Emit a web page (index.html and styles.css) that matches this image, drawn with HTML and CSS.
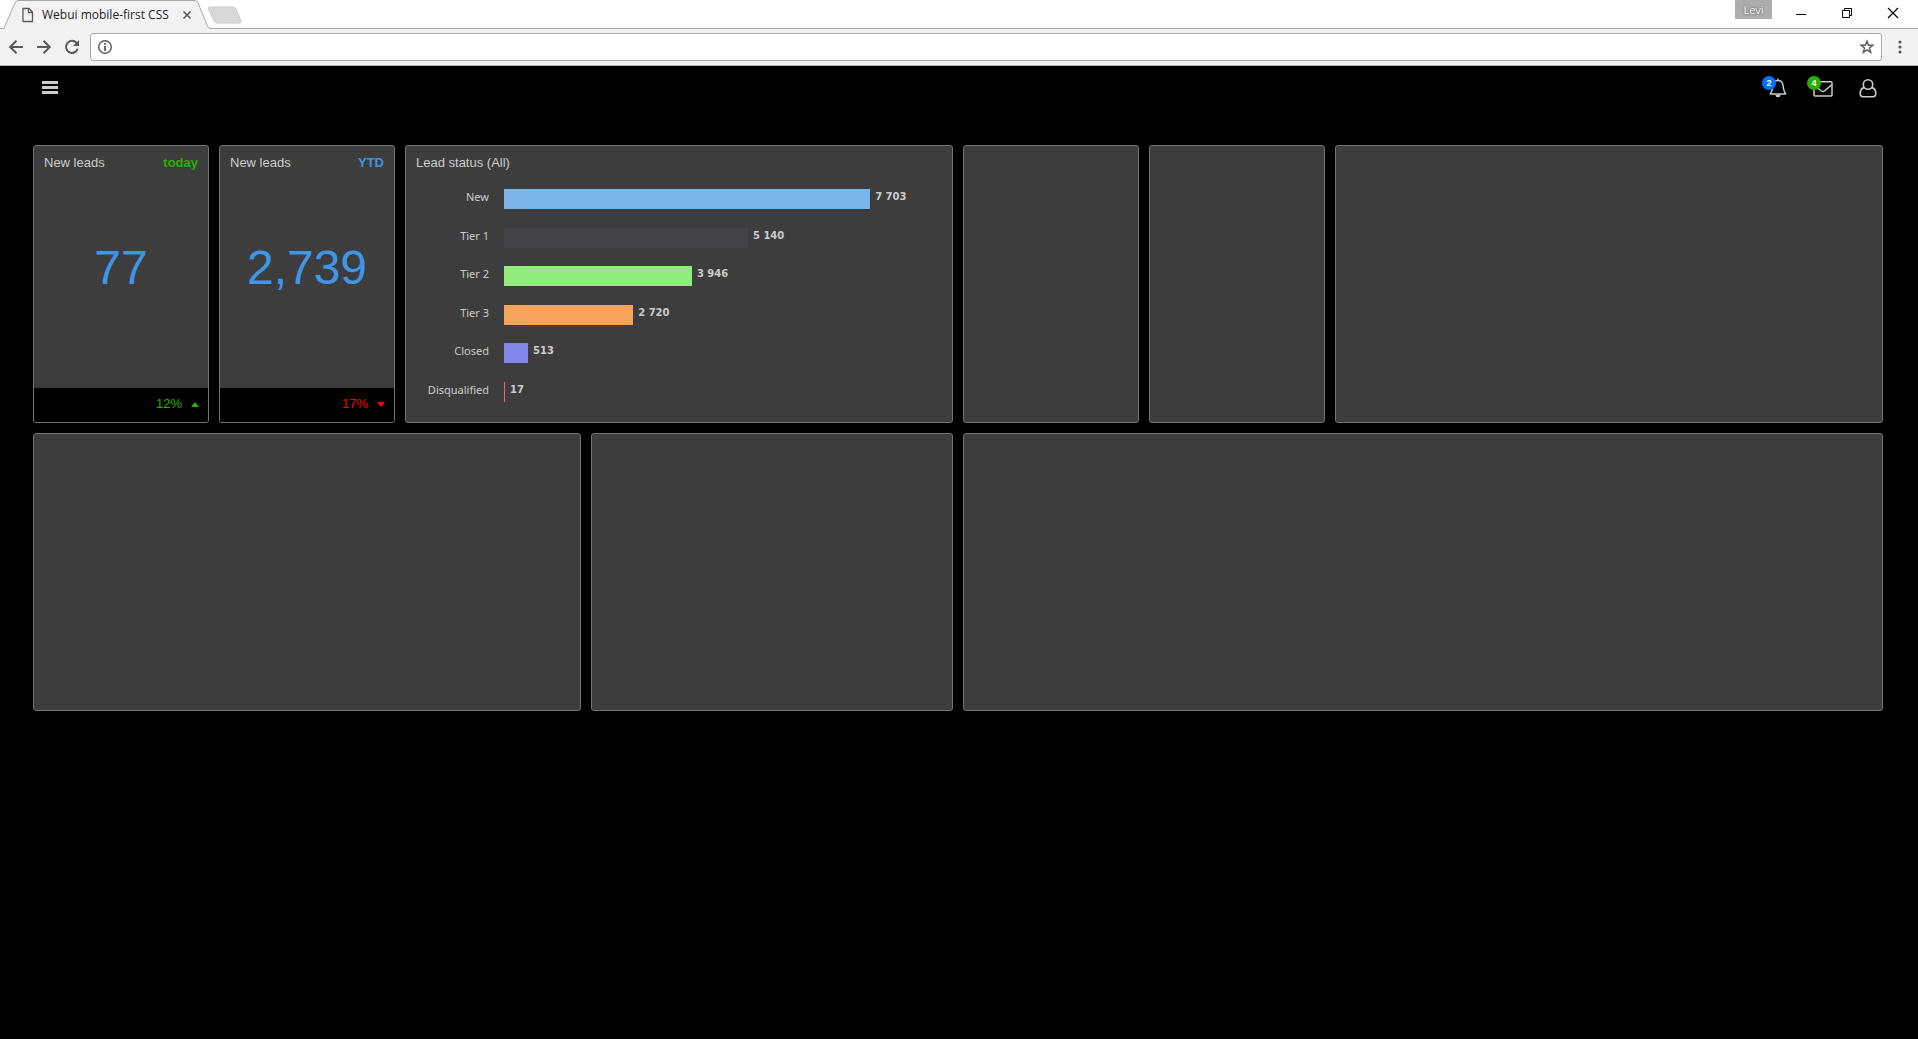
FILE: index.html
```html
<!DOCTYPE html>
<html lang="en">
<head>
<meta charset="utf-8">
<title>Webui mobile-first CSS</title>
<link rel="stylesheet" href="styles.css">
</head>
<body>
<div class="browser">
  <div class="tabstrip">
    <div class="tab">
      <svg class="tab-shape" width="208" height="29" viewBox="0 0 208 29" aria-hidden="true"><path d="M0 28.500 Q1 28.500 1.500 27 L12 3 Q13 .5 15 .5 H192 Q194 .5 195 3 L205 27 Q206 28.500 208 28.500" fill="#f2f2f2" stroke="#a9a9a9"/><path d="M2 28.500H206" stroke="#f2f2f2"/></svg>
      <svg class="tab-icon" width="12" height="16" viewBox="0 0 12 16" aria-hidden="true"><path d="M1 1.500H7L10.500 5V14.500H1Z M6.500 1.500V5.500H10.500" fill="none" stroke="#5a5a5a" stroke-width="1.300"/></svg>
      <span class="tab-title">Webui mobile-first CSS</span>
      <button class="tab-close" aria-label="Close tab"><svg width="10" height="10" viewBox="0 0 10 10"><path d="M1.500 1.500L8.500 8.500M8.500 1.500L1.500 8.500" stroke="#5a5a5a" stroke-width="1.600"/></svg></button>
    </div>
    <button class="new-tab" aria-label="New tab"><svg width="36" height="19" viewBox="0 0 36 19"><path d="M3 1H26Q28 1 29 3L34 15Q34.500 17 33 17H10Q8 17 7 15L1.500 3Q1 1 3 1Z" fill="#d8d8d8" stroke="#cacaca"/></svg></button>
    <button class="profile">Levi</button>
    <button class="win" aria-label="Minimize"><svg width="12" height="12" viewBox="0 0 12 12"><path d="M1 7.500H11" stroke="#000"/></svg></button>
    <button class="win" aria-label="Restore"><svg width="12" height="12" viewBox="0 0 12 12"><path d="M1.500 3.500H8.500V10.500H1.500ZM3.500 3.500V1.500H10.500V8.500H8.500" fill="none" stroke="#000"/></svg></button>
    <button class="win" aria-label="Close"><svg width="12" height="12" viewBox="0 0 12 12"><path d="M1 1L11 11M11 1L1 11" stroke="#000" stroke-width="1.200"/></svg></button>
  </div>
  <div class="toolbar">
    <button class="nav" aria-label="Back"><svg width="16" height="16" viewBox="0 0 16 16"><path d="M15 8H2.500M8.500 1.700L2.200 8L8.500 14.300" fill="none" stroke="#5a5a5a" stroke-width="2"/></svg></button>
    <button class="nav" aria-label="Forward"><svg width="16" height="16" viewBox="0 0 16 16"><path d="M1 8H13.500M7.500 1.700L13.800 8L7.500 14.300" fill="none" stroke="#5a5a5a" stroke-width="2"/></svg></button>
    <button class="nav" aria-label="Reload"><svg width="16" height="16" viewBox="0 0 16 16"><path d="M12.600 4A6 6 0 1 0 13.700 9.800" fill="none" stroke="#5a5a5a" stroke-width="2"/><path d="M15 1V7H9Z" fill="#5a5a5a"/></svg></button>
    <div class="address">
      <svg width="16" height="16" viewBox="0 0 16 16" aria-hidden="true"><circle cx="8" cy="8" r="6.300" fill="none" stroke="#5a5a5a" stroke-width="1.400"/><path d="M8 4V5.700M8 7V12" stroke="#5a5a5a" stroke-width="1.800"/></svg>
      <input class="address-input" type="text" aria-label="Address">
      <button class="star" aria-label="Bookmark"><svg width="16" height="16" viewBox="0 0 16 16"><path d="M8 2.200L9.600 6.300H13.900L10.500 9L11.700 13.400L8 10.900L4.300 13.400L5.500 9L2.100 6.300H6.400Z" fill="none" stroke="#5a5a5a" stroke-width="1.400"/></svg></button>
    </div>
    <button class="menu-dots" aria-label="Menu"><svg width="4" height="14" viewBox="0 0 4 14"><g fill="#5a5a5a"><circle cx="2" cy="2" r="1.600"/><circle cx="2" cy="7" r="1.600"/><circle cx="2" cy="12" r="1.600"/></g></svg></button>
  </div>
</div>

<header class="app-header">
  <button class="icon-button" aria-label="Navigation"><svg width="16" height="14" viewBox="0 0 16 14"><path d="M0 1.500H16M0 6.500H16M0 11.500H16" stroke="#ccc" stroke-width="3"/></svg></button>
  <div class="header-actions">
    <button class="icon-button" aria-label="Notifications">
      <svg width="20" height="20" viewBox="0 0 20 20"><path d="M10 .8V2.500M2.300 16C4.500 13 4.800 10.500 5 7.500C5.300 4.200 7.200 2.600 10 2.600S14.700 4.200 15 7.500C15.200 10.500 15.500 13 17.700 16Z" fill="none" stroke="#ccc" stroke-width="1.500" stroke-linejoin="round"/><path d="M7.500 16.700H12.500A2.500 2.500 0 0 1 7.500 16.700Z" fill="#ccc"/></svg>
      <span class="badge badge-blue">2</span>
    </button>
    <button class="icon-button" aria-label="Messages">
      <svg width="20" height="20" viewBox="0 0 20 20"><rect x="1" y="3.700" width="18" height="14.300" rx="1" fill="none" stroke="#ccc" stroke-width="1.500"/><path d="M1 7.500L8.500 13Q10 14 11.500 13L19 6.500" fill="none" stroke="#ccc" stroke-width="1.500"/></svg>
      <span class="badge badge-green">4</span>
    </button>
    <button class="icon-button" aria-label="Account">
      <svg width="20" height="20" viewBox="0 0 20 20"><circle cx="10" cy="6.500" r="4.700" fill="none" stroke="#ccc" stroke-width="1.600"/><path d="M6.500 9.600C3.500 9.900 2.200 12.500 2.200 15.500Q2.200 18.700 5 18.700H15Q17.800 18.700 17.800 15.500C17.800 12.500 16.500 9.900 13.500 9.600" fill="none" stroke="#ccc" stroke-width="1.600"/></svg>
    </button>
  </div>
</header>

<main class="dashboard">
  <section class="card">
    <div class="card-head"><h2 class="card-title">New leads</h2><strong class="up">today</strong></div>
    <div class="figure">77</div>
    <div class="card-foot up">12%<svg width="8" height="5" viewBox="0 0 8 5" aria-hidden="true"><path d="M0 5L4 0L8 5Z" fill="currentColor"/></svg></div>
  </section>
  <section class="card">
    <div class="card-head"><h2 class="card-title">New leads</h2><strong class="info">YTD</strong></div>
    <div class="figure">2,739</div>
    <div class="card-foot down">17%<svg width="8" height="5" viewBox="0 0 8 5" aria-hidden="true"><path d="M0 0L4 5L8 0Z" fill="currentColor"/></svg></div>
  </section>
  <section class="card span-3">
    <div class="card-head"><h2 class="card-title">Lead status (All)</h2></div>
    <div class="chart">
      <div class="row"><span class="label">New</span><div class="track"><div class="bar c-new" style="width:83.6%"></div><b class="value">7 703</b></div></div>
      <div class="row"><span class="label">Tier 1</span><div class="track"><div class="bar c-tier1" style="width:55.7%"></div><b class="value">5 140</b></div></div>
      <div class="row"><span class="label">Tier 2</span><div class="track"><div class="bar c-tier2" style="width:42.9%"></div><b class="value">3 946</b></div></div>
      <div class="row"><span class="label">Tier 3</span><div class="track"><div class="bar c-tier3" style="width:29.5%"></div><b class="value">2 720</b></div></div>
      <div class="row"><span class="label">Closed</span><div class="track"><div class="bar c-closed" style="width:5.5%"></div><b class="value">513</b></div></div>
      <div class="row"><span class="label">Disqualified</span><div class="track"><div class="bar c-disq" style="width:0.2%"></div><b class="value">17</b></div></div>
    </div>
  </section>
  <section class="card"></section>
  <section class="card"></section>
  <section class="card span-3"></section>
  <section class="card span-3"></section>
  <section class="card span-2"></section>
  <section class="card span-5"></section>
</main>
</body>
</html>
```
FILE: styles.css
```css
* { box-sizing: border-box; }
body {
  margin: 0;
  min-height: 100vh;
  background: #000;
  color: #ccc;
  font: 13px/16px "Liberation Sans", Arial, sans-serif;
}
button {
  display: flex;
  align-items: center;
  justify-content: center;
  padding: 0;
  border: 0;
  background: none;
  color: inherit;
  font: inherit;
}
svg { display: block; flex: none; }

/* Browser frame */
.tabstrip {
  display: flex;
  height: 29px;
  padding: 0 2px 0 3px;
  background: #fff;
  border-bottom: 1px solid #a9a9a9;
}
.tab {
  position: relative;
  display: flex;
  align-items: center;
  width: 204px;
  height: 29px;
  padding: 0 15px 0 19px;
  gap: 8px;
}
.tab-shape { position: absolute; left: 0; top: 0; }
.tab-icon, .tab-title, .tab-close { position: relative; }
.tab-title {
  flex: 1;
  color: #222;
  font: 12px/16px "Open Sans", "Noto Sans", sans-serif;
  white-space: nowrap;
}
.new-tab { height: 31px; }
.profile {
  width: 37px;
  height: 19px;
  margin-left: auto;
  margin-right: 6px;
  background: #adadad;
  color: #fff;
  font: 11px/16px "Open Sans", sans-serif;
  text-shadow: 0 0 2px #333;
}
.win { width: 46px; height: 26px; }
.toolbar {
  display: flex;
  align-items: center;
  height: 37px;
  padding: 0 16px 0 2px;
  background: #f2f2f2;
  border-bottom: 1px solid #b5b5b5;
}
.nav { width: 28px; height: 28px; }
.address {
  display: flex;
  flex: 1;
  align-items: center;
  height: 28px;
  margin: 0 16px 0 4px;
  padding: 0 6px;
  background: #fff;
  border: 1px solid #a9a9a9;
  border-radius: 3px;
}
.address-input {
  flex: 1;
  border: 0;
  outline: 0;
  background: none;
  font: inherit;
}

/* Application header */
.app-header {
  display: flex;
  align-items: center;
  justify-content: space-between;
  height: 44px;
  padding: 0 40px;
}
.header-actions { display: flex; gap: 25px; }
.icon-button { position: relative; min-width: 20px; height: 20px; }
.badge {
  position: absolute;
  left: -6px;
  top: -2px;
  width: 14px;
  height: 14px;
  border-radius: 50%;
  color: #fff;
  font: bold 9px/14px "Liberation Sans", Arial, sans-serif;
  text-align: center;
}
.badge-blue { background: #0070ff; }
.badge-green { background: #28b000; }

/* Dashboard grid */
.dashboard {
  display: grid;
  grid-template-columns: repeat(10, 1fr);
  grid-auto-rows: minmax(278px, auto);
  gap: 10px;
  padding: 35px 35px 35px 33px;
}
.card {
  display: flex;
  flex-direction: column;
  min-width: 0;
  overflow: hidden;
  background: #3d3d3d;
  border: 1px solid #747474;
  border-radius: 3px;
}
.span-2 { grid-column: span 2; }
.span-3 { grid-column: span 3; }
.span-5 { grid-column: span 5; }
.card-head {
  display: flex;
  justify-content: space-between;
  padding: 9px 10px 7px;
}
.card-title { margin: 0; font-size: 13px; font-weight: normal; }
.figure {
  display: flex;
  flex: 1;
  align-items: center;
  justify-content: center;
  padding-bottom: 30px;
  color: #4096e6;
  font-size: 48px;
  line-height: 56px;
}
.card-foot {
  display: flex;
  align-items: center;
  justify-content: flex-end;
  gap: 9px;
  height: 34px;
  padding: 0 9px 2px;
  background: #000;
}
.up { color: #28b000; }
.down { color: #f00; }
.info { color: #4096e6; }

/* Lead status chart */
.chart {
  display: flex;
  flex: 1;
  flex-direction: column;
  padding: 2px 10px 11px;
  font: 11px/16px "Noto Sans", "Open Sans", sans-serif;
}
.row { display: flex; flex: 1; align-items: center; gap: 15px; }
.label { width: 73px; padding-bottom: 4px; text-align: right; }
.track { display: flex; flex: 1; align-items: center; gap: 5px; }
.bar { flex: none; height: 20px; }
.value { padding-bottom: 4px; font: bold 10px/16px "DejaVu Sans", sans-serif; }
.c-new { background: #7cb5ec; }
.c-tier1 { background: #434348; }
.c-tier2 { background: #90ed7d; }
.c-tier3 { background: #f7a35c; }
.c-closed { background: #8085e9; }
.c-disq { min-width: 1px; background: #f15c80; }
```
